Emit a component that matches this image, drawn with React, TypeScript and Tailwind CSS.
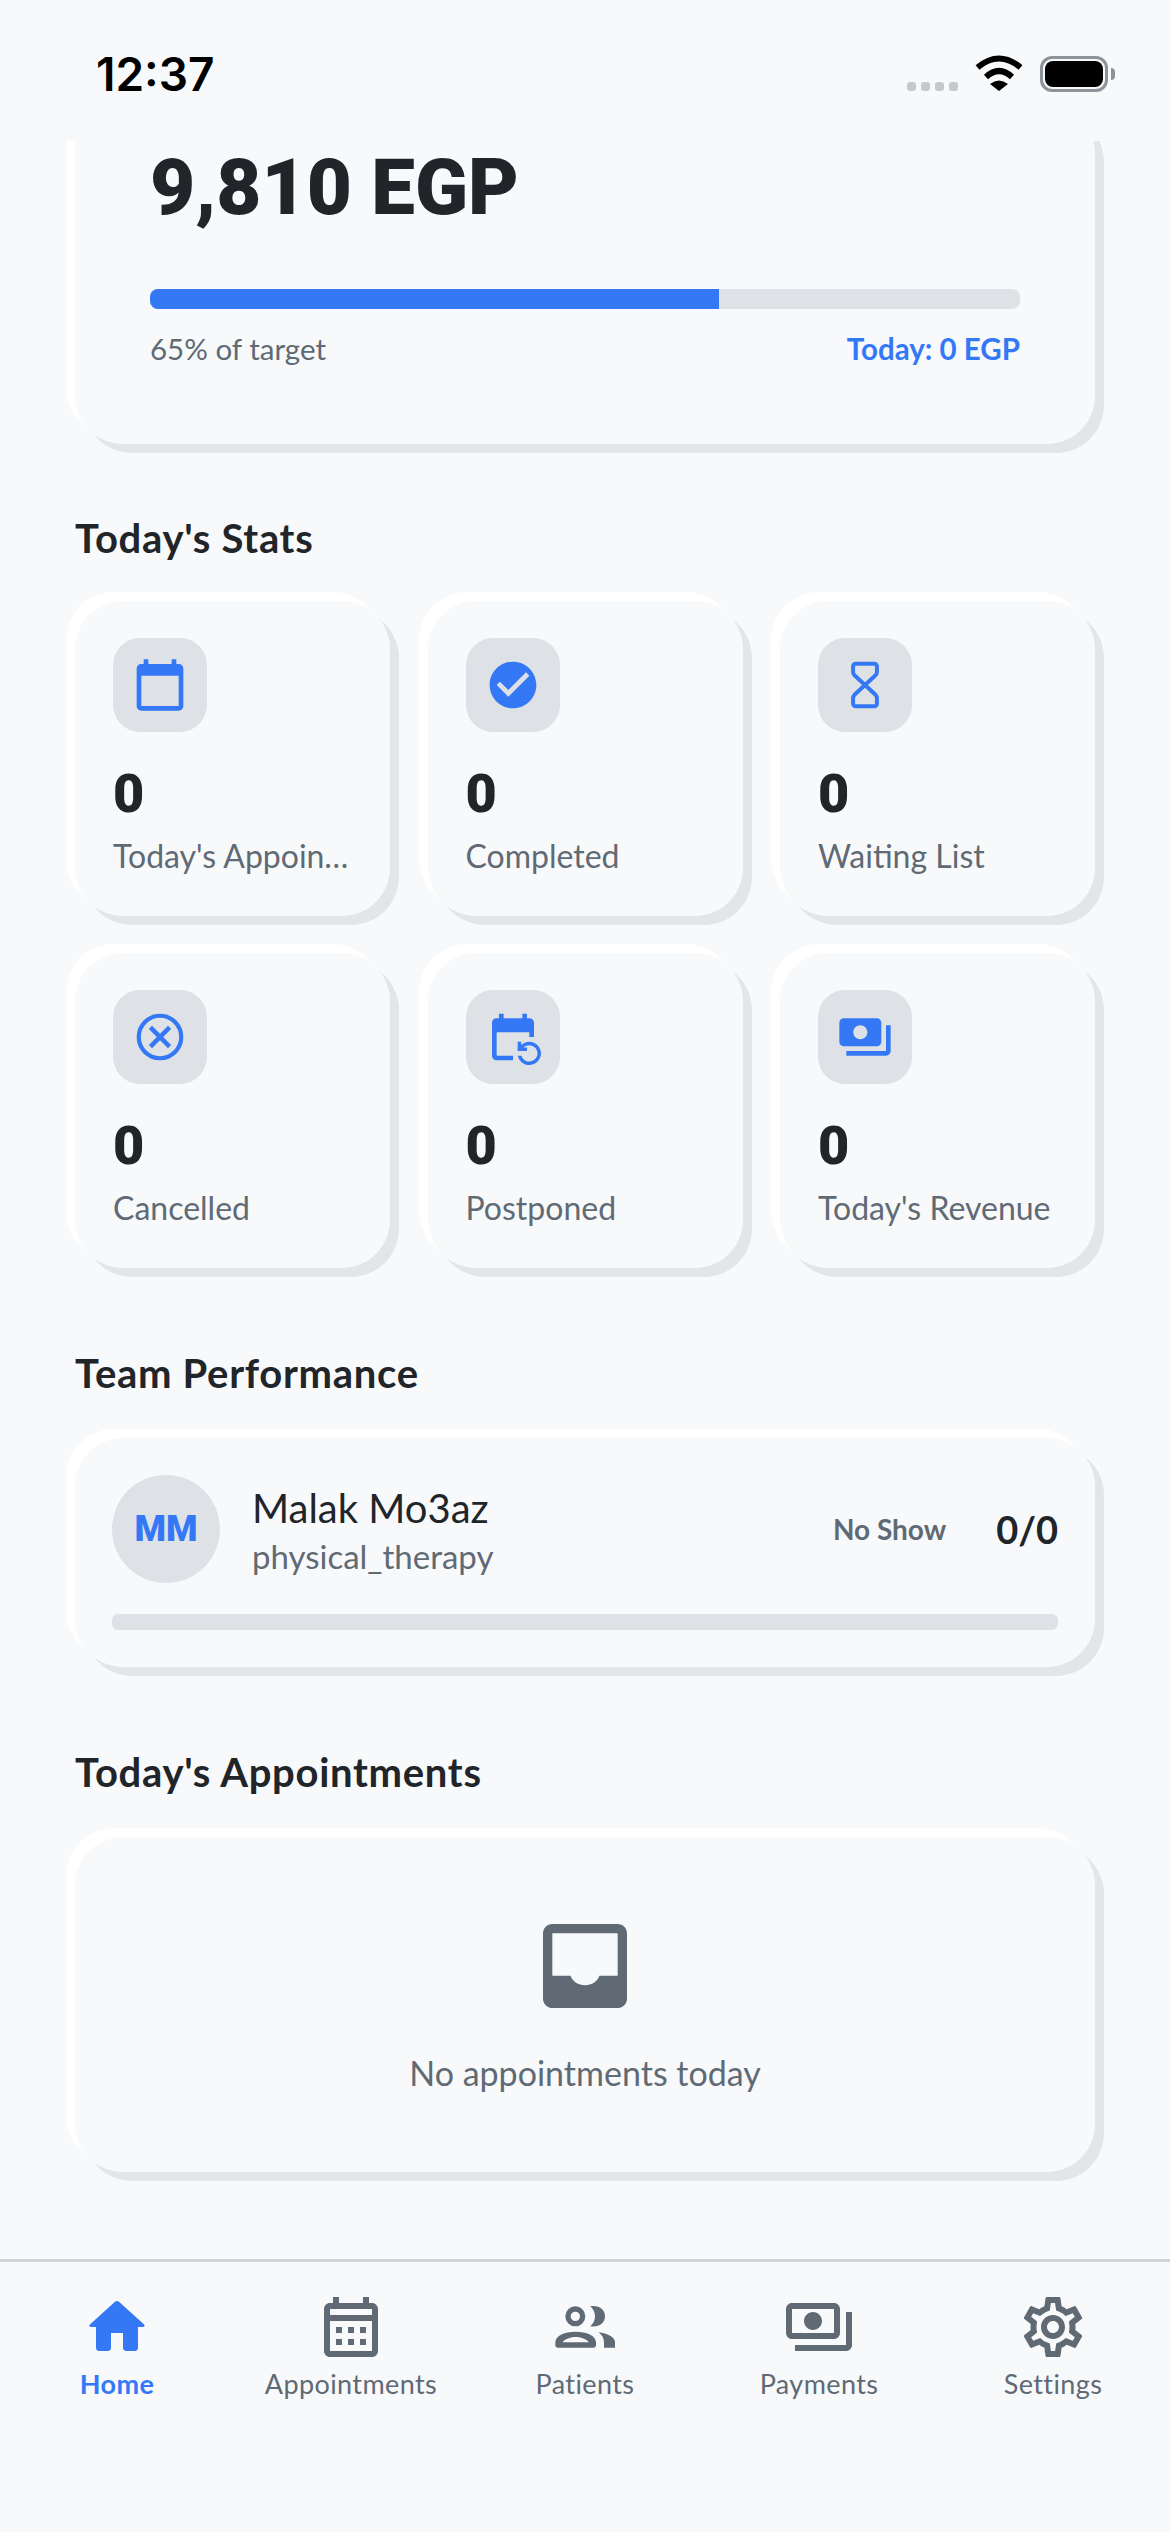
import React from "react";

const cardClass =
  "rounded-[48px] bg-[#f8f9fa] shadow-[-9px_-9px_0_#ffffff,9px_9px_0_#e3e5e8]";

const paths = {
  calendarToday:
    "M20 3h-1V1h-2v2H7V1H5v2H4c-1.1 0-2 .9-2 2v16c0 1.1.9 2 2 2h16c1.1 0 2-.9 2-2V5c0-1.1-.9-2-2-2zm0 18H4V8h16v13z",
  checkCircle:
    "M12 2C6.48 2 2 6.48 2 12s4.48 10 10 10 10-4.48 10-10S17.52 2 12 2zm-2 15l-5-5 1.41-1.41L10 14.17l7.59-7.59L19 8l-9 9z",
  eventRepeat:
    "M21 12V6c0-1.1-.9-2-2-2h-1V2h-2v2H8V2H6v2H5c-1.11 0-2 .9-2 2v14c0 1.1.89 2 2 2h7v-2H5V10h14v2h2zm-5.36 8c.43 1.45 1.77 2.5 3.36 2.5 1.93 0 3.5-1.57 3.5-3.5s-1.57-3.5-3.5-3.5c-.95 0-1.82.38-2.45 1H18V18h-4v-4h1.5v1.43C16.41 14.55 17.64 14 19 14c2.76 0 5 2.24 5 5s-2.24 5-5 5c-2.42 0-4.44-1.72-4.9-4h1.54z",
  paymentsFilled:
    "M19 14V6c0-1.1-.9-2-2-2H3c-1.1 0-2 .9-2 2v8c0 1.1.9 2 2 2h14c1.1 0 2-.9 2-2zm-9-1c-1.66 0-3-1.34-3-3s1.34-3 3-3 3 1.34 3 3-1.34 3-3 3zm13-6v11c0 1.1-.9 2-2 2H4v-2h17V7h2z",
  home:
    "M10 19v-5h4v5c0 .55.45 1 1 1h3c.55 0 1-.45 1-1v-7h1.7c.46 0 .68-.57.33-.87L12.67 3.6c-.38-.34-.96-.34-1.34 0l-8.36 7.53c-.34.3-.13.87.33.87H5v7c0 .55.45 1 1 1h3c.55 0 1-.45 1-1z",
  calendarMonth:
    "M19 4h-1V2h-2v2H8V2H6v2H5c-1.11 0-1.99.9-1.99 2L3 20c0 1.1.89 2 2 2h14c1.1 0 2-.9 2-2V6c0-1.1-.9-2-2-2zm0 16H5V10h14v10zm0-12H5V6h14v2zM9 14H7v-2h2v2zm4 0h-2v-2h2v2zm4 0h-2v-2h2v2zm-8 4H7v-2h2v2zm4 0h-2v-2h2v2zm4 0h-2v-2h2v2z",
  payments:
    "M19 14V6c0-1.1-.9-2-2-2H3c-1.1 0-2 .9-2 2v8c0 1.1.9 2 2 2h14c1.1 0 2-.9 2-2zm-2 0H3V6h14v8zm-7-7c-1.66 0-3 1.34-3 3s1.34 3 3 3 3-1.34 3-3-1.34-3-3-3zm13 0v11c0 1.1-.9 2-2 2H4v-2h17V7h2z",
  settings:
    "M19.43 12.98c.04-.32.07-.64.07-.98 0-.34-.03-.66-.07-.98l2.11-1.65c.19-.15.24-.42.12-.64l-2-3.46c-.09-.16-.26-.25-.44-.25-.06 0-.12.01-.17.03l-2.49 1c-.52-.4-1.08-.73-1.69-.98l-.38-2.65C14.46 2.18 14.25 2 14 2h-4c-.25 0-.46.18-.49.42l-.38 2.65c-.61.25-1.17.59-1.69.98l-2.49-1c-.06-.02-.12-.03-.18-.03-.17 0-.34.09-.43.25l-2 3.46c-.13.22-.07.49.12.64l2.11 1.65c-.04.32-.07.65-.07.98 0 .33.03.66.07.98l-2.11 1.65c-.19.15-.24.42-.12.64l2 3.46c.09.16.26.25.44.25.06 0 .12-.01.17-.03l2.49-1c.52.4 1.08.73 1.69.98l.38 2.65c.03.24.24.42.49.42h4c.25 0 .46-.18.49-.42l.38-2.65c.61-.25 1.17-.59 1.69-.98l2.49 1c.06.02.12.03.18.03.17 0 .34-.09.43-.25l2-3.46c.12-.22.07-.49-.12-.64l-2.11-1.65zm-1.98-1.71c.04.31.05.52.05.73 0 .21-.02.43-.05.73l-.14 1.13.89.7 1.08.84-.7 1.21-1.27-.51-1.04-.42-.9.68c-.43.32-.84.56-1.25.73l-1.06.43-.16 1.13-.2 1.35h-1.4l-.19-1.35-.16-1.13-1.06-.43c-.43-.18-.83-.41-1.23-.71l-.91-.7-1.06.43-1.27.51-.7-1.21 1.08-.84.89-.7-.14-1.13c-.03-.31-.05-.54-.05-.74s.02-.43.05-.73l.14-1.13-.89-.7-1.08-.84.7-1.21 1.27.51 1.04.42.9-.68c.43-.32.84-.56 1.25-.73l1.06-.43.16-1.13.2-1.35h1.39l.19 1.35.16 1.13 1.06.43c.43.18.83.41 1.23.71l.91.7 1.06-.43 1.27-.51.7 1.21-1.07.85-.89.7.14 1.13zM12 8c-2.21 0-4 1.79-4 4s1.79 4 4 4 4-1.79 4-4-1.79-4-4-4zm0 6c-1.1 0-2-.9-2-2s.9-2 2-2 2 .9 2 2-.9 2-2 2z",
  inbox:
    "M19 3H5c-1.1 0-2 .9-2 2v14c0 1.1.9 2 2 2h14c1.1 0 2-.9 2-2V5c0-1.1-.9-2-2-2zm0 11.1h-3.900c-.5 1.300-1.600 2-3.100 2s-2.600-.7-3.100-2H5V5h14v9.100z",
};

const Icon = ({ d, className }: { d: string; className: string }) => (
  <svg viewBox="0 0 24 24" fill="currentColor" className={className}>
    <path d={d} />
  </svg>
);

// rounded outline hourglass, crossing at the waist
const Hourglass = () => (
  <svg viewBox="0 0 24 24" fill="none" stroke="currentColor" strokeWidth={1.7} className="size-[56px] text-[#3478f6]">
    <path d="M8 2.900H16a1.100 1.100 0 0 1 1.100 1.100V6.400a2 2 0 0 1-.6 1.400L12 12l4.500 4.200a2 2 0 0 1 .6 1.400V20a1.100 1.100 0 0 1-1.100 1.100H8a1.100 1.100 0 0 1-1.100-1.100V17.600a2 2 0 0 1 .6-1.400L12 12 7.500 7.800a2 2 0 0 1-.6-1.400V4A1.100 1.100 0 0 1 8 2.900Z" />
  </svg>
);

// thin ring with a long cross
const CancelRing = () => (
  <svg viewBox="0 0 24 24" fill="none" stroke="currentColor" className="size-[56px] text-[#3478f6]">
    <circle cx="12" cy="12" r="9.1" strokeWidth={1.8} />
    <path d="M7.900 7.900L16.100 16.100M16.100 7.900L7.900 16.100" strokeWidth={1.9} />
  </svg>
);

// two people: ring head, arched body, crescent and wing behind
const PeopleGlyph = ({ className }: { className: string }) => (
  <svg viewBox="57 18 216 216" fill="currentColor" fillRule="evenodd" className={className}>
    <path d="M136 64a30 30 0 1 1 0 60a30 30 0 1 1 0-60ZM136 80a14 14 0 1 0 0 28a14 14 0 1 0 0-28Z" />
    <path d="M181 64C205 60 225 72 225 94C225 116 205 128 181 124C190 116 195 106 195 94C195 82 190 72 181 64Z" />
    <path d="M76 180V172C76 152 105 140 137 140C169 140 198 152 198 172V180Q198 188 190 188H84Q76 188 76 180ZM98 172H176C172 164 155 156 137 156C119 156 102 164 98 172Z" />
    <path d="M206 142C232 146 255 156 255 172V188H222V172C222 160 216 150 206 142Z" />
  </svg>
);

const WifiGlyph = () => (
  <svg viewBox="0 0 48 36" fill="none" className="w-[48px] h-[36px]">
    <path d="M2.500 12.500Q24-5.500 45.500 12.500" stroke="#000" strokeWidth={6} />
    <path d="M11 22Q24 10 37 22" stroke="#000" strokeWidth={6} />
    <path d="M15 29Q24 22 33 29L24 36Z" fill="#000" />
  </svg>
);

const stats = [
  { icon: <Icon d={paths.calendarToday} className="size-[56px] text-[#3478f6]" />, value: "0", label: "Today's Appointments" },
  { icon: <Icon d={paths.checkCircle} className="size-[56px] text-[#3478f6]" />, value: "0", label: "Completed" },
  { icon: <Hourglass />, value: "0", label: "Waiting List" },
  { icon: <CancelRing />, value: "0", label: "Cancelled" },
  { icon: <Icon d={paths.eventRepeat} className="size-[56px] text-[#3478f6]" />, value: "0", label: "Postponed" },
  { icon: <Icon d={paths.paymentsFilled} className="size-[56px] text-[#3478f6]" />, value: "0", label: "Today's Revenue" },
];

const tabs = [
  { icon: <Icon d={paths.home} className="size-[72px] text-[#3478f6]" />, label: "Home", active: true },
  { icon: <Icon d={paths.calendarMonth} className="size-[72px] text-[#5f6a75]" />, label: "Appointments", active: false },
  { icon: <PeopleGlyph className="size-[72px] text-[#5f6a75]" />, label: "Patients", active: false },
  { icon: <Icon d={paths.payments} className="size-[72px] text-[#5f6a75]" />, label: "Payments", active: false },
  { icon: <Icon d={paths.settings} className="size-[72px] text-[#5f6a75]" />, label: "Settings", active: false },
];

const SectionTitle = ({ children, className }: { children: React.ReactNode; className: string }) => (
  <h2 className={`text-[40px] leading-[48px] font-bold tracking-[0.7px] text-[#212529] ${className}`}>{children}</h2>
);

const StatCard = ({ icon, value, label }: { icon: React.ReactNode; value: string; label: string }) => (
  <div className={`${cardClass} h-[315px] pt-[37px] px-[38px] min-w-0`}>
    <div className="size-[94px] rounded-[27px] bg-[#dee2e6] flex items-center justify-center">{icon}</div>
    <div className="mt-[31px] text-[54px] leading-[62px] font-black font-['Roboto',sans-serif] text-[#212529]">{value}</div>
    <div className="mt-[11px] text-[32px] leading-[40px] text-[#5f6a75] truncate">{label}</div>
  </div>
);

export default function App() {
  return (
    <div className="w-[1170px] h-[2532px] flex flex-col bg-[#f8f9fa] font-['Lato',sans-serif] overflow-hidden">
      {/* status bar */}
      <div className="h-[141px] shrink-0 flex items-start justify-between pl-[96px] pr-[55px] pt-[49px]">
        <span className="text-[46px] leading-[50px] font-semibold text-black font-['Inter',sans-serif]">12:37</span>
        <div className="flex items-start">
          <div className="flex gap-[5px] mt-[33px]">
            <span className="size-[9px] rounded-[3px] bg-[#c5c9ce]" />
            <span className="size-[9px] rounded-[3px] bg-[#c5c9ce]" />
            <span className="size-[9px] rounded-[3px] bg-[#c5c9ce]" />
            <span className="size-[9px] rounded-[3px] bg-[#c5c9ce]" />
          </div>
          <div className="ml-[17px] mt-[6px]">
            <WifiGlyph />
          </div>
          <div className="ml-[17px] mt-[7px] flex items-center">
            <div className="w-[68px] h-[36px] rounded-[12px] border-[3px] border-[#8e9399] p-[2px]">
              <div className="w-full h-full rounded-[8px] bg-black" />
            </div>
            <div className="w-[4px] h-[12px] ml-[3px] rounded-r-[4px] bg-[#8e9399]" />
          </div>
        </div>
      </div>

      <main className="flex-1 overflow-hidden px-[75px]">
        {/* monthly target card, scrolled partly out of view */}
        <div className={`${cardClass} -mt-[36px] pt-[38px] px-[75px] pb-[73px]`}>
          <div className="text-[78px] leading-[90px] font-black font-['Roboto',sans-serif] text-[#212529]">9,810 EGP</div>
          <div className="mt-[56px] h-[20px] rounded-[8px] bg-[#dee2e6] overflow-hidden">
            <div className="h-full bg-[#3478f6]" style={{ width: "65.4%" }} />
          </div>
          <div className="mt-[18px] flex justify-between text-[29.500px] leading-[44px]">
            <span className="text-[#5f6a75]">65% of target</span>
            <span className="font-bold text-[#3478f6]">Today: 0 EGP</span>
          </div>
        </div>

        <SectionTitle className="mt-[70px] mb-[39px]">Today's Stats</SectionTitle>
        <div className="grid grid-cols-3 gap-x-[37.500px] gap-y-[37px]">
          {stats.map((stat) => (
            <StatCard key={stat.label} icon={stat.icon} value={stat.value} label={stat.label} />
          ))}
        </div>

        <SectionTitle className="mt-[81px] mb-[41px]">Team Performance</SectionTitle>
        <div className={`${cardClass} h-[229px] pt-[37px] px-[37px]`}>
          <div className="flex items-center">
            <div className="size-[108px] rounded-full bg-[#dee2e6] flex items-center justify-center text-[36px] font-black font-['Roboto',sans-serif] text-[#3478f6]">
              MM
            </div>
            <div className="ml-[32px] flex-1 pt-[2px]">
              <div className="text-[40px] leading-[50px] text-[#212529]">Malak Mo3az</div>
              <div className="mt-[2px] text-[33px] leading-[42px] text-[#5f6a75]">physical_therapy</div>
            </div>
            <span className="text-[28px] font-bold text-[#5f6a75]">No Show</span>
            <span className="ml-[50px] text-[38px] font-bold text-[#212529]">0/0</span>
          </div>
          <div className="mt-[31px] h-[16px] rounded-[6px] bg-[#dee2e6]" />
        </div>

        <SectionTitle className="mt-[81px] mb-[41px]">Today's Appointments</SectionTitle>
        <div className={`${cardClass} h-[335px] flex flex-col items-center pt-[73px]`}>
          <Icon d={paths.inbox} className="size-[112px] text-[#5f6a75]" />
          <div className="mt-[29px] text-[34px] leading-[44px] text-[#5f6a75]">No appointments today</div>
        </div>
      </main>

      {/* bottom tabs */}
      <nav className="h-[273px] shrink-0 border-t-[3px] border-[#ced4da] flex pt-[29px]">
        {tabs.map((tab) => (
          <div key={tab.label} className="flex-1 flex flex-col items-center">
            {tab.icon}
            <span
              className={`mt-[3px] text-[27px] leading-[36px] tracking-[0.4px] ${tab.active ? "font-bold text-[#3478f6]" : "text-[#5f6a75]"}`}
            >
              {tab.label}
            </span>
          </div>
        ))}
      </nav>
    </div>
  );
}
